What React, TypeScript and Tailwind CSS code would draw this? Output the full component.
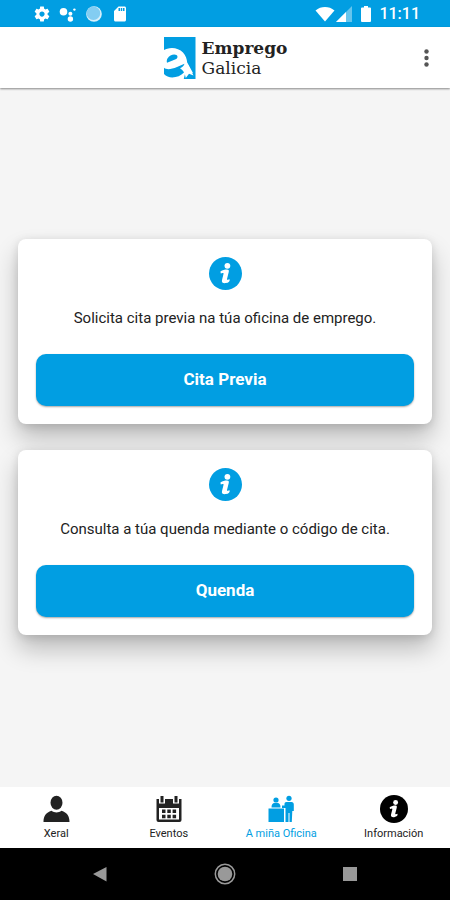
import React from "react";

const BLUE = "#019ee2";

function InfoIcon({ className }: { className?: string }) {
  return (
    <svg viewBox="0 0 33 33" className={className} aria-hidden="true">
      <circle cx="16.5" cy="16.5" r="16.5" fill="currentColor" />
      <circle cx="18.4" cy="8.8" r="2.9" fill="#fff" />
      <path
        d="M11.4 14.4c2.200-1.300 4.300-1.900 6.600-1.900 1.500 0 2.100.8 1.800 2.200l-1.800 7.200c-.2.8.2 1 .8.8l1.800-.5c.6 1.900-.8 3.500-3.900 3.900-2.900.3-4.300-.9-3.700-3.200l1.500-5.800c.2-.9-.1-1.200-1-1l-1.700.3z"
        fill="#fff"
      />
    </svg>
  );
}

function StatusBar() {
  return (
    <div className="flex h-[27px] shrink-0 items-center justify-between bg-[#019ee2] pr-[30px] pl-[33px] text-white">
      <div className="flex items-center gap-2">
        <svg viewBox="0 0 24 24" className="size-[18px]" fill="currentColor" aria-hidden="true">
          <path d="M19.43 12.98c.04-.32.07-.64.07-.98s-.03-.66-.07-.98l2.11-1.65c.19-.15.24-.42.12-.64l-2-3.46c-.12-.22-.39-.3-.61-.22l-2.49 1c-.52-.4-1.08-.73-1.69-.98l-.38-2.65C14.46 2.18 14.25 2 14 2h-4c-.25 0-.46.18-.49.42l-.38 2.65c-.61.25-1.17.59-1.69.98l-2.49-1c-.23-.09-.49 0-.61.22l-2 3.46c-.13.22-.07.49.12.64l2.11 1.65c-.04.32-.07.65-.07.98s.03.66.07.98l-2.11 1.65c-.19.15-.24.42-.12.64l2 3.46c.12.22.39.3.61.22l2.49-1c.52.4 1.08.73 1.69.98l.38 2.65c.03.24.24.42.49.42h4c.25 0 .46-.18.49-.42l.38-2.65c.61-.25 1.17-.59 1.69-.98l2.49 1c.23.09.49 0 .61-.22l2-3.46c.12-.22.07-.49-.12-.64l-2.11-1.65zM12 15.5c-1.93 0-3.5-1.57-3.5-3.5s1.57-3.5 3.5-3.5 3.5 1.57 3.5 3.5-1.57 3.5-3.5 3.5z" />
        </svg>
        <svg viewBox="0 0 18 18" className="size-[18px]" fill="currentColor" aria-hidden="true">
          <circle cx="4.5" cy="6.8" r="3.8" />
          <circle cx="11.4" cy="8.8" r="2" />
          <circle cx="15.4" cy="4.6" r="1.2" />
          <circle cx="11.4" cy="14" r="2.7" />
        </svg>
        <svg viewBox="0 0 18 18" className="size-[18px]" aria-hidden="true">
          <circle cx="9" cy="9" r="7.8" fill="#d8f0fb" />
          <circle cx="8.4" cy="8.2" r="6.8" fill="#83cdf2" />
        </svg>
        <svg viewBox="0 0 24 24" className="size-[18px]" fill="currentColor" aria-hidden="true">
          <path d="M18 2h-8L4 8v12c0 1.100.9 2 2 2h12c1.100 0 2-.9 2-2V4c0-1.100-.9-2-2-2zm-6 6h-2V4h2v4zm3 0h-2V4h2v4zm3 0h-2V4h2v4z" />
        </svg>
      </div>
      <div className="flex items-center">
        <svg viewBox="0 0 20 16" className="h-4 w-5" fill="currentColor" aria-hidden="true">
          <path d="M.5 4.400C6 -.2 14 -.2 19.500 4.400L10 15.600z" />
        </svg>
        <svg viewBox="0 0 16 16" className="ml-px size-4" fill="currentColor" aria-hidden="true">
          <path d="M16 0v16H0z" opacity=".4" />
          <path d="M10 6v10H0z" />
        </svg>
        <svg viewBox="0 0 10 16" className="mr-2 ml-[9px] h-4 w-[10px]" fill="currentColor" aria-hidden="true">
          <path d="M3 0h4v1.600h2a1 1 0 0 1 1 1V15a1 1 0 0 1-1 1H1a1 1 0 0 1-1-1V2.600a1 1 0 0 1 1-1h2z" />
        </svg>
        <span className="text-base leading-5 font-medium">11:11</span>
      </div>
    </div>
  );
}

function Header() {
  return (
    <header className="relative z-10 flex h-[61px] shrink-0 items-center justify-center bg-white shadow-[0_1px_2px_rgba(0,0,0,0.45)]">
      <div className="flex items-center gap-[6px]">
        <svg viewBox="0 0 33 44" className="h-11 w-[33px]" aria-hidden="true">
          <path d="M1 1h31.500v42H1z" fill={BLUE} />
          {/* white letter with its tail */}
          <path d="M0 14.500C6 10.500 15 11 20 16.500c3 3.400 3.800 6.500 4.200 10L30 37l-7.500-1L20.500 44H0z" fill="#fff" />
          {/* counter and lower bowl */}
          <path d="M4.500 22.500c2-3.500 6.500-5 9-3.500 1.700 1.100 1.200 3.200-.8 4.200l-8.700 3.600c-.5-1.300-.3-2.800.5-4.300z" fill={BLUE} />
          <path d="M1 31.800c3 2.400 7.500 1.400 13-.8l7.500-3.200c-.5 2-2.500 3.500-4.500 4.500 2 1.200 3.200 2.500 4 4.200-5 5.500-15.500 7-20 1.500z" fill={BLUE} />
          <path d="M24.500 27.500 30.500 39.500 26 37.800 22.800 42l-1.800-7z" fill="#fff" />
        </svg>
        <div className="font-['DejaVu_Serif',serif] text-[17px] leading-5 text-[#222]">
          <div className="font-bold">Emprego</div>
          <div>Galicia</div>
        </div>
      </div>
      <button type="button" aria-label="Menú" className="absolute right-3 flex h-10 w-6 items-center justify-center text-[#555]">
        <svg viewBox="0 0 5 18" className="h-[18px] w-[5px]" fill="currentColor" aria-hidden="true">
          <circle cx="2.500" cy="2.500" r="2.200" />
          <circle cx="2.500" cy="9" r="2.200" />
          <circle cx="2.500" cy="15.500" r="2.200" />
        </svg>
      </button>
    </header>
  );
}

function Card({ text, action }: { text: string; action: string }) {
  return (
    <section className="flex flex-col items-center rounded-lg bg-white p-[18px] shadow-[0_14px_24px_rgba(0,0,0,0.24),0_2px_10px_rgba(0,0,0,0.12)]">
      <InfoIcon className="size-[33px] text-[#019ee2]" />
      <p className="mt-4 mb-6 text-center text-[15px] leading-6 text-[#222]">{text}</p>
      <button
        type="button"
        className="h-[52px] w-full rounded-[10px] bg-[#019ee2] text-[17px] font-bold text-white shadow-[0_1px_2px_rgba(0,0,0,0.35)]"
      >
        {action}
      </button>
    </section>
  );
}

function PersonIcon() {
  return (
    <svg viewBox="0 0 28 28" className="size-7" fill="currentColor" aria-hidden="true">
      <ellipse cx="14.500" cy="7.800" rx="6" ry="7" />
      <path d="M1.500 27c0-6 2.500-9.500 8-11.200 3 2.300 7 2.300 10 0 5.500 1.700 8 5.200 8 11.200z" />
    </svg>
  );
}

function CalendarIcon() {
  return (
    <svg viewBox="0 0 28 28" className="size-7" aria-hidden="true">
      <path d="M1.500 4h25v21a2 2 0 0 1-2 2h-21a2 2 0 0 1-2-2z" fill="currentColor" />
      <path d="M4 13h20v11.500H4zM4 0h6v8.500H4zM18 0h6v8.500h-6z" fill="#fff" />
      <path
        d="M5.500 1h3v6.500h-3zM19.500 1h3v6.500h-3zM7 14.500h3.500v3.500H7zM12.300 14.500h3.500v3.500h-3.500zM17.600 14.500h3.500v3.500h-3.500zM7 19.800h3.500v3.400H7zM12.300 19.800h3.500v3.400h-3.500zM17.600 19.800h3.500v3.400h-3.500z"
        fill="currentColor"
      />
    </svg>
  );
}

function OfficeIcon() {
  return (
    <svg viewBox="0 0 28 28" className="size-7" fill="currentColor" aria-hidden="true">
      <circle cx="9" cy="5" r="2.600" />
      <path d="M4.500 12.500c0-3 1-4.300 3-4.500h3c2 .2 3 1.500 3 4.500z" />
      <path d="M1.500 13.500H17v13.500H1.500z" />
      <circle cx="22" cy="3.300" r="2.600" />
      <path d="M19.500 7h5c1.500 0 2.300 1 2.300 2.500V16h-1.500l-.5 11h-2.300v-9h-1v9h-3V13h-3.500v-2.500h2.500V9c0-1.300.7-2 2-2z" />
    </svg>
  );
}

const tabs = [
  { label: "Xeral", icon: <PersonIcon /> },
  { label: "Eventos", icon: <CalendarIcon /> },
  { label: "A miña Oficina", icon: <OfficeIcon />, active: true },
  { label: "Información", icon: <InfoIcon className="size-7 text-black" /> },
];

function TabBar() {
  return (
    <nav className="grid h-[61px] shrink-0 grid-cols-4 bg-white">
      {tabs.map((tab) => (
        <a
          key={tab.label}
          href="#"
          aria-current={tab.active ? "page" : undefined}
          className={`flex flex-col items-center gap-[3px] pt-2 text-[11px] leading-4 ${tab.active ? "text-[#019ee2]" : "text-[#222]"}`}
        >
          {tab.icon}
          <span>{tab.label}</span>
        </a>
      ))}
    </nav>
  );
}

function SystemBar() {
  return (
    <div className="flex h-[52px] shrink-0 items-center justify-center gap-[103px] bg-black text-[#999]">
      <button type="button" aria-label="Atrás">
        <svg viewBox="0 0 22 22" className="size-[22px]" fill="currentColor" aria-hidden="true">
          <path d="M4 11 17.500 4v14.500z" />
        </svg>
      </button>
      <button type="button" aria-label="Inicio">
        <svg viewBox="0 0 22 22" className="size-[22px]" aria-hidden="true">
          <circle cx="11" cy="11" r="9.700" fill="none" stroke="currentColor" strokeWidth="1.500" />
          <circle cx="11" cy="11" r="7.300" fill="currentColor" />
        </svg>
      </button>
      <button type="button" aria-label="Recentes">
        <svg viewBox="0 0 22 22" className="size-[22px]" fill="currentColor" aria-hidden="true">
          <path d="M4 4h14v14H4z" />
        </svg>
      </button>
    </div>
  );
}

export default function App() {
  return (
    <div className="flex min-h-screen flex-col bg-[#f5f5f5] font-[Roboto,sans-serif]">
      <StatusBar />
      <Header />
      <main className="flex grow flex-col justify-center gap-[26px] px-[18px] pb-[2px]">
        <Card text="Solicita cita previa na túa oficina de emprego." action="Cita Previa" />
        <Card text="Consulta a túa quenda mediante o código de cita." action="Quenda" />
      </main>
      <TabBar />
      <SystemBar />
    </div>
  );
}
